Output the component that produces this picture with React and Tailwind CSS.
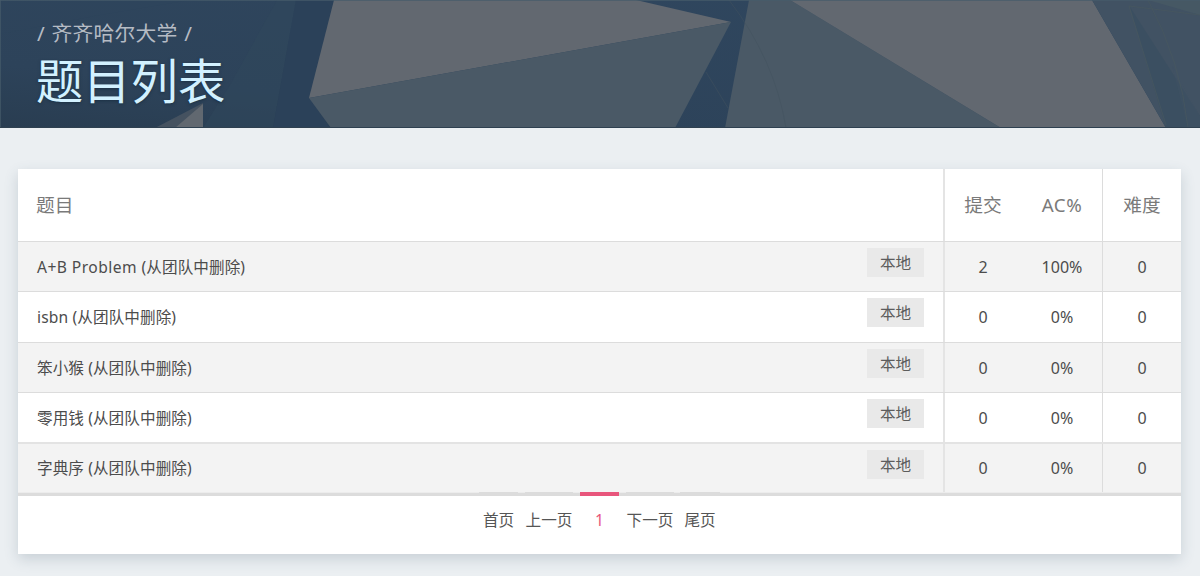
const rows = [
  { name: 'A+B Problem', tracking: 'tracking-[0.45px]', submit: '2', rate: '100%', level: '0', style: 'h-[50px] bg-[#f3f3f3] border-b border-[#dcdcdc]' },
  { name: 'isbn', tracking: 'tracking-[0.15px]', submit: '0', rate: '0%', level: '0', style: 'h-[51px] bg-white border-b border-[#dcdcdc]' },
  { name: '笨小猴', tracking: '', submit: '0', rate: '0%', level: '0', style: 'h-[50px] bg-[#f3f3f3] border-b border-[#dcdcdc]' },
  { name: '零用钱', tracking: '', submit: '0', rate: '0%', level: '0', style: 'h-[51px] bg-white border-b-2 border-[#e3e3e3]' },
  { name: '字典序', tracking: '', submit: '0', rate: '0%', level: '0', style: 'h-[49px] bg-[#f3f3f3] border-b border-[#ececec]' },
];

const pages = [
  { label: '首页', style: 'w-[39px] mr-[7px]' },
  { label: '上一页', style: 'w-[48px] mr-[7px]' },
  { label: '1', style: 'w-[39px] mr-[7px]', active: true },
  { label: '下一页', style: 'w-[48px] mr-[6px]' },
  { label: '尾页', style: 'w-[40px]' },
];

function Banner() {
  return (
    <header className="relative h-32 overflow-hidden bg-[#2e445b]">
      <svg className="absolute inset-0" width="1200" height="128" viewBox="0 0 1200 128" aria-hidden="true">
        <defs>
          <linearGradient id="base" x1="0" y1="1" x2="1" y2="0">
            <stop offset="0" stopColor="#293d51" />
            <stop offset="0.25" stopColor="#2d435a" />
            <stop offset="1" stopColor="#30475f" />
          </linearGradient>
        </defs>
        <rect width="1200" height="128" fill="url(#base)" />
        <path d="M0 34 L100 15 L190 0 H0Z" fill="#2e465c" opacity=".3" />
        <path d="M277 0 L230 85 L203 128 H273 L296 0Z" fill="#30475c" opacity=".5" />
        <path d="M296 0 L273 128 H330 L309 98 L334 0Z" fill="#2b4159" />
        <path d="M155 128 L203 103 V128Z" fill="#455260" />
        <path d="M175 128 L203 104 V128Z" fill="#616870" />
        <path d="M334 0 L309 98 L731 22 L636 0Z" fill="#626870" />
        <path d="M309 98 L331 128 H675 L731 22Z" fill="#4a5966" />
        <path d="M749 0 L725 128 H1001 L800 6 L790 0Z" fill="#4a5966" />
        <path d="M790 0 L1001 128 H1166 L1092 0Z" fill="#626870" />
        <path d="M1092 0 L1166 128 H1200 V0Z" fill="#415263" />
        <path d="M1130 7 L1166 128 H1200 V116Z" fill="#3b4f61" />
        <path d="M1172 66 L1188 128 H1200 V116Z" fill="#415263" opacity=".4" />
        <path d="M1148 0 L1200 15 V0Z" fill="#465864" />
        <path d="M1129 6 L1200 15 M1129 6 L1166 125 M1148 0 Q1181 62 1188 128" fill="none" stroke="#48585f" strokeWidth=".7" />
        <path d="M729 0 Q775 60 786 128 M706 72 L728 108" fill="none" stroke="#43535f" strokeWidth=".5" />
        <path d="M0 .5H1200 M.5 0V128" stroke="#465b6a" strokeWidth=".7" />
        <path d="M0 127.5H1200" stroke="#2e4050" strokeWidth="1" />
      </svg>
      <div className="relative flex flex-col pl-[37px] pt-[18px]">
        <p className="h-[30px] whitespace-pre text-[20.8px] leading-[30px] tracking-[0.2px] text-[#b5bbc4] [word-spacing:1px]">/ 齐齐哈尔大学 /</p>
        <h1 className="-ml-px text-[47.3px] font-normal leading-[66px] text-[#d2f1ff] [text-shadow:0_1px_3px_#1b3044]">题目列表</h1>
      </div>
    </header>
  );
}

function Grid({ className, children }) {
  return <div className={`grid grid-cols-[927px_77px_81px_78px] ${className}`}>{children}</div>;
}

function Problems() {
  return (
    <section className="h-[385px] w-[1163px] bg-white shadow-[0_5px_13px_rgba(60,85,105,0.2)]">
      <Grid className="h-[73px] border-b border-[#dcdcdc] text-[18.7px] text-[#7a7a7a]">
        <div className="flex items-center border-r-2 border-[#e4e4e4] pl-[18px]">题目</div>
        <div className="flex items-center justify-center pr-px">提交</div>
        <div className="flex items-center justify-center border-r border-[#dcdcdc] tracking-[0.5px]">AC%</div>
        <div className="flex items-center justify-center">难度</div>
      </Grid>
      {rows.map((row) => (
        <Grid key={row.name} className={`text-[15.6px] text-[#4c4c4c] ${row.style}`}>
          <div className="flex justify-between border-r-2 border-[#e4e4e4] pl-[19px] pr-[19px]">
            <span className="self-center whitespace-pre pt-[2px] tracking-[0.08px]">
              <span className={row.tracking}>{row.name} </span>(从团队中删除)
            </span>
            <span className="mt-[6px] flex h-[29px] w-[57px] items-center justify-center bg-[#e9e9e9] pt-[2px] text-[#5c5c5c]">本地</span>
          </div>
          <div className="flex items-center justify-center pr-px text-base">{row.submit}</div>
          <div className="flex items-center justify-center border-r border-[#dcdcdc] text-base">{row.rate}</div>
          <div className="flex items-center justify-center text-base">{row.level}</div>
        </Grid>
      ))}
      <nav className="flex h-[61px] justify-center border-t-[3px] border-[#dcdcdc] text-[15.6px] text-[#555]">
        {pages.map((page) => (
          <a
            key={page.label}
            className={`-mt-1 flex h-[54px] items-center justify-center whitespace-nowrap border-t-4 ${page.style} ${page.active ? 'border-[#e8567c] text-[#e8567c]' : 'border-[#dcdcdc]'}`}
          >
            {page.label}
          </a>
        ))}
      </nav>
    </section>
  );
}

export default function App() {
  return (
    <div className="h-[576px] overflow-hidden bg-[#ebeff2] font-['Noto_Sans','Noto_Sans_CJK_SC',sans-serif]">
      <Banner />
      <main className="pl-[18px] pt-[41px]">
        <Problems />
      </main>
    </div>
  );
}
